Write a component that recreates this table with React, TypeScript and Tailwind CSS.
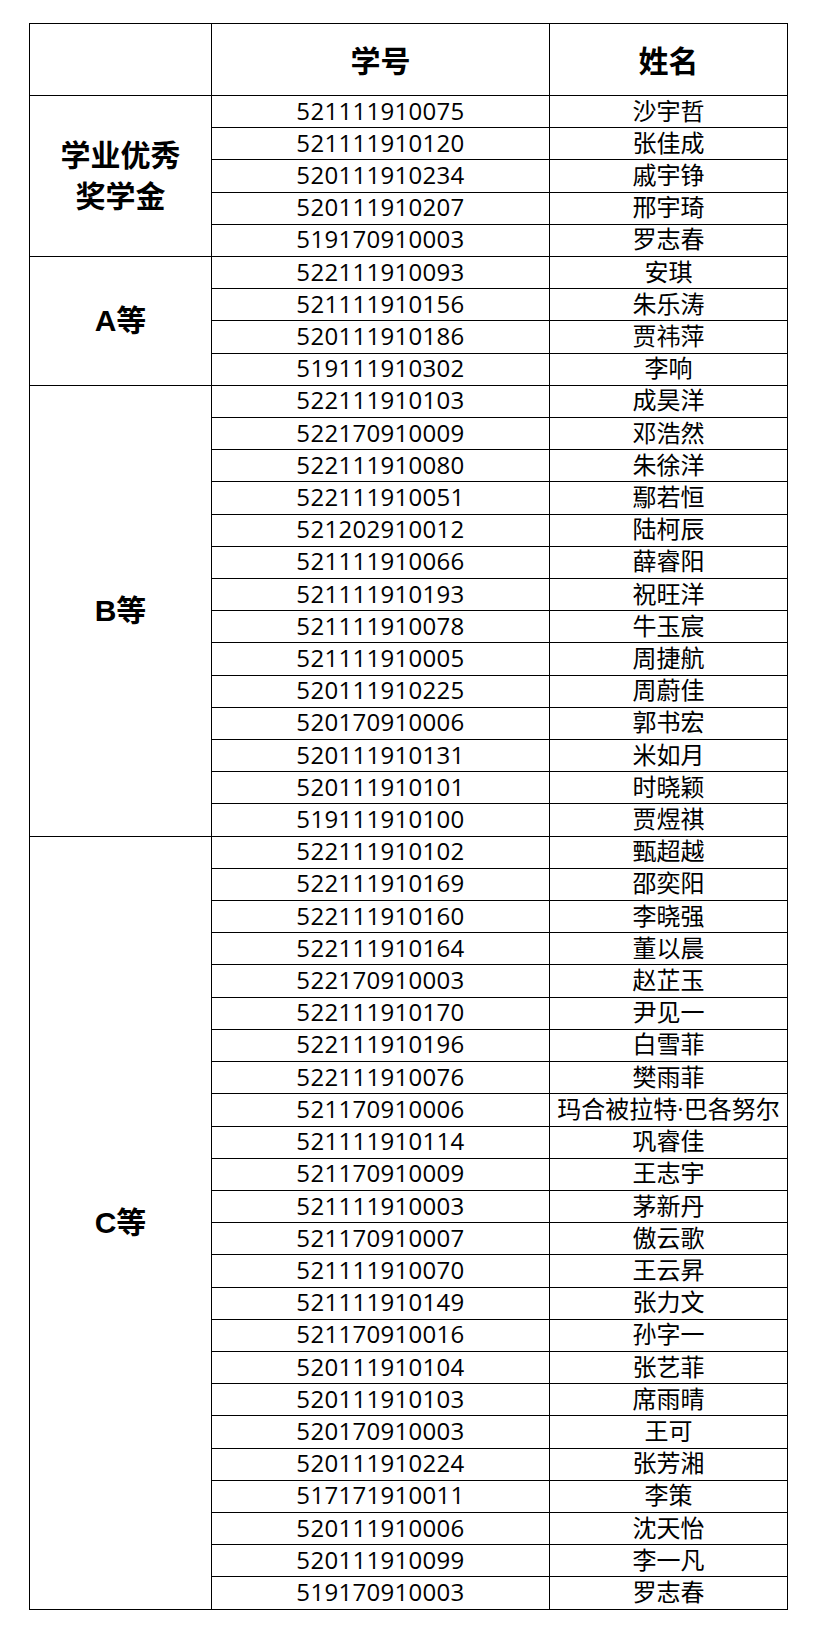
import React from 'react';

type Row = [string, string];

interface Group {
  label: string[];
  rows: Row[];
}

const groups: Group[] = [
  {
    label: ['学业优秀', '奖学金'],
    rows: [
      ['521111910075', '沙宇哲'],
      ['521111910120', '张佳成'],
      ['520111910234', '戚宇铮'],
      ['520111910207', '邢宇琦'],
      ['519170910003', '罗志春'],
    ],
  },
  {
    label: ['A等'],
    rows: [
      ['522111910093', '安琪'],
      ['521111910156', '朱乐涛'],
      ['520111910186', '贾祎萍'],
      ['519111910302', '李响'],
    ],
  },
  {
    label: ['B等'],
    rows: [
      ['522111910103', '成昊洋'],
      ['522170910009', '邓浩然'],
      ['522111910080', '朱徐洋'],
      ['522111910051', '鄢若恒'],
      ['521202910012', '陆柯辰'],
      ['521111910066', '薛睿阳'],
      ['521111910193', '祝旺洋'],
      ['521111910078', '牛玉宸'],
      ['521111910005', '周捷航'],
      ['520111910225', '周蔚佳'],
      ['520170910006', '郭书宏'],
      ['520111910131', '米如月'],
      ['520111910101', '时晓颖'],
      ['519111910100', '贾煜祺'],
    ],
  },
  {
    label: ['C等'],
    rows: [
      ['522111910102', '甄超越'],
      ['522111910169', '邵奕阳'],
      ['522111910160', '李晓强'],
      ['522111910164', '董以晨'],
      ['522170910003', '赵芷玉'],
      ['522111910170', '尹见一'],
      ['522111910196', '白雪菲'],
      ['522111910076', '樊雨菲'],
      ['521170910006', '玛合被拉特·巴各努尔'],
      ['521111910114', '巩睿佳'],
      ['521170910009', '王志宇'],
      ['521111910003', '茅新丹'],
      ['521170910007', '傲云歌'],
      ['521111910070', '王云昇'],
      ['521111910149', '张力文'],
      ['521170910016', '孙字一'],
      ['520111910104', '张艺菲'],
      ['520111910103', '席雨晴'],
      ['520170910003', '王可'],
      ['520111910224', '张芳湘'],
      ['517171910011', '李策'],
      ['520111910006', '沈天怡'],
      ['520111910099', '李一凡'],
      ['519170910003', '罗志春'],
    ],
  },
];

const App: React.FC = () => {
  return (
    <div className="min-h-[1635px] w-[819px] bg-white pl-[29px] pt-[23px] font-['Open_Sans','Noto_Sans_CJK_SC',sans-serif] text-black">
      <table className="w-[758px] table-fixed border-collapse">
        <colgroup>
          <col className="w-[182px]" />
          <col className="w-[338px]" />
          <col className="w-[238px]" />
        </colgroup>
        <thead>
          <tr className="h-[72px]">
            <th className="border border-black p-0" />
            <th className="border border-black p-0 pb-[2px] text-center text-[30px] font-bold leading-[36px] font-['Noto_Sans_CJK_SC',sans-serif]">学号</th>
            <th className="border border-black p-0 pb-[2px] text-center text-[30px] font-bold leading-[36px] font-['Noto_Sans_CJK_SC',sans-serif]">姓名</th>
          </tr>
        </thead>
        <tbody>
          {groups.map(group =>
            group.rows.map(([id, name], i) => (
              <tr key={group.label.join('') + id + i} className="h-[32.21px]">
                {i === 0 && (
                  <td
                    rowSpan={group.rows.length}
                    className="border border-black p-0 text-center align-middle text-[30px] font-bold leading-[41px] font-['Liberation_Sans','Noto_Sans_CJK_SC',sans-serif]"
                  >
                    {group.label.map(l => (
                      <div key={l}>{l}</div>
                    ))}
                  </td>
                )}
                <td className="border border-black p-0 pb-[2px] text-center text-[24px] leading-[28px] tracking-[0.3px]">{id}</td>
                <td className="border border-black p-0 pb-[2px] text-center text-[24px] leading-[28px] whitespace-nowrap">{name}</td>
              </tr>
            ))
          )}
        </tbody>
      </table>
    </div>
  );
};

export default App;
